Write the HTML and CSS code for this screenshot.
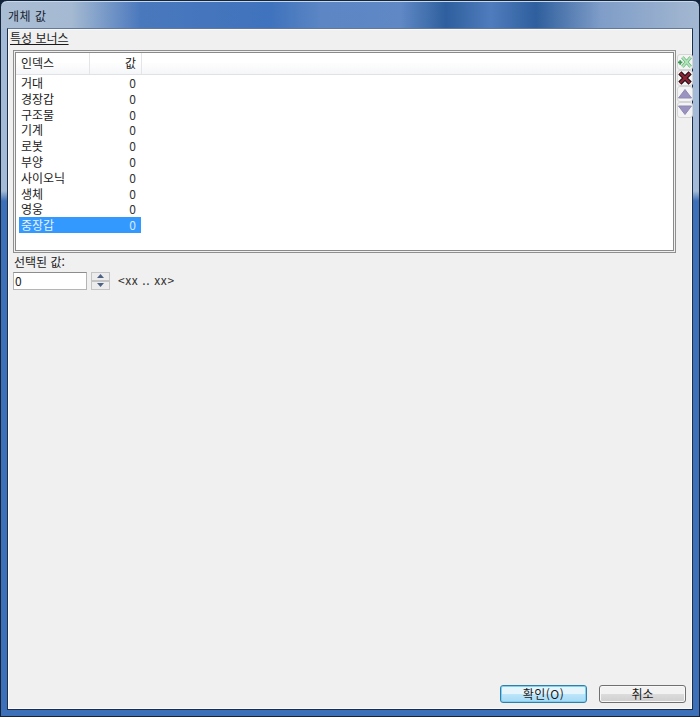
FILE: index.html
```html
<!DOCTYPE html>
<html lang="ko">
<head>
<meta charset="utf-8">
<title>개체 값</title>
<link rel="stylesheet" href="styles.css">
</head>
<body>
<div class="window">
  <div class="titlebar">개체 값</div>
  <div class="client">
    <div class="section-label">특성 보너스</div>
    <div class="list-row">
      <div class="list-box">
        <div class="list-inner">
          <div class="list-head">
            <div class="col-name">인덱스</div>
            <div class="col-value">값</div>
          </div>
          <div class="list-body">
            <div class="row"><span class="name">거대</span><span class="value">0</span></div>
            <div class="row"><span class="name">경장갑</span><span class="value">0</span></div>
            <div class="row"><span class="name">구조물</span><span class="value">0</span></div>
            <div class="row"><span class="name">기계</span><span class="value">0</span></div>
            <div class="row"><span class="name">로봇</span><span class="value">0</span></div>
            <div class="row"><span class="name">부양</span><span class="value">0</span></div>
            <div class="row"><span class="name">사이오닉</span><span class="value">0</span></div>
            <div class="row"><span class="name">생체</span><span class="value">0</span></div>
            <div class="row"><span class="name">영웅</span><span class="value">0</span></div>
            <div class="row selected"><span class="name">중장갑</span><span class="value">0</span></div>
          </div>
        </div>
      </div>
      <div class="tools">
        <div class="tool">
          <svg viewBox="0 0 16 14" width="16" height="14"><path d="M0 7.5h5M2.5 5v5" stroke="#3f9a58" stroke-width="2" fill="none"/><path d="M5 1.5l9.5 11M14.5 1.5L5 12.5" stroke="#5fae72" stroke-width="3.6" fill="none"/><path d="M5 1.5l9.5 11M14.5 1.5L5 12.5" stroke="#b4e6bc" stroke-width="2" fill="none"/></svg>
        </div>
        <div class="tool">
          <svg viewBox="0 0 15 14" width="15" height="14"><path d="M2 1.5l11 11M13 1.5L2 12.5" stroke="#15100f" stroke-width="4.8" fill="none"/><path d="M2 1.5l11 11M13 1.5L2 12.5" stroke="#8c2436" stroke-width="2.6" fill="none"/></svg>
        </div>
        <div class="tool">
          <svg viewBox="0 0 14 10" width="14" height="10"><path d="M7 .5l6.5 8.5H.5z" fill="#9a92bf" stroke="#8f87b4"/></svg>
        </div>
        <div class="tool">
          <svg viewBox="0 0 14 10" width="14" height="10"><path d="M7 9.5L.5 1h13z" fill="#9a92bf" stroke="#8f87b4"/></svg>
        </div>
      </div>
    </div>
    <div class="selected-label">선택된 값:</div>
    <div class="editor">
      <div class="input">0</div>
      <div class="spinner">
        <div class="spin"><svg viewBox="0 0 7 4" width="7" height="4"><path d="M3.5 0L7 4H0z" fill="#4d6185"/></svg></div>
        <div class="spin"><svg viewBox="0 0 7 4" width="7" height="4"><path d="M3.5 4L7 0H0z" fill="#4d6185"/></svg></div>
      </div>
      <div class="range">&lt;xx .. xx&gt;</div>
    </div>
    <div class="actions">
      <div class="btn default">확인(O)</div>
      <div class="btn">취소</div>
    </div>
  </div>
</div>
</body>
</html>
```
FILE: styles.css
```css
html, body {
  margin: 0;
  padding: 0;
  background: #10223a;
}
.window {
  box-sizing: border-box;
  width: 700px;
  height: 717px;
  display: flex;
  flex-direction: column;
  padding: 0 6px 6px;
  border: 1px solid #16243a;
  border-radius: 7px 7px 0 0;
  background:
    linear-gradient(90deg, #a9bdd4 0, #a5bad2 70px, #4a78bd 140px, #3f73bd 270px, #5c86c4 320px, #5f88c5 400px, #2f5f9e 445px, #4f7cbc 490px, #2f5f9e 535px, #7f9dc8 600px, #9db3cf 680px, #a3b7d1 700px) 0 0 / 100% 28px no-repeat,
    linear-gradient(#a3bbd6 0, #a3bbd6 190px, #3c70b8 200px, #3c70b8 100%);
  box-shadow: inset 0 1px 0 #c4d9ee;
  font-family: "Noto Sans CJK KR", "Liberation Sans", sans-serif;
  font-size: 12px;
  color: #1a1a1a;
}
.titlebar {
  height: 27px;
  line-height: 29px;
  padding-left: 1px;
  letter-spacing: .5px;
  color: #18222e;
}
.client {
  flex: 1;
  min-height: 0;
  display: flex;
  flex-direction: column;
  box-sizing: border-box;
  background: #f0f0f0;
  border: 1px solid #1d2e48;
  border-top-color: #64799a;
  box-shadow: inset 0 0 0 1px #fafafa;
  padding: 1px 0 6px 2px;
}
.section-label {
  height: 20px;
  line-height: 16px;
  text-decoration: underline;
}
.list-row {
  display: flex;
  align-items: flex-start;
}
.list-box {
  box-sizing: border-box;
  flex: none;
  width: 663px;
  height: 203px;
  margin-left: 3px;
  border: 1px solid #8f8f8f;
  background: #f0f0f0;
  padding: 1px;
}
.list-inner {
  box-sizing: border-box;
  height: 100%;
  background: #fff;
  border: 1px solid #8a8a8a;
  padding-left: 3px;
}
.list-head {
  display: flex;
  height: 21px;
  margin-left: -3px;
  background: linear-gradient(#ffffff 40%, #f5f6f8);
  border-bottom: 1px solid #dfe3e8;
  line-height: 20px;
}
.col-name {
  box-sizing: border-box;
  width: 74px;
  padding-left: 5px;
  border-right: 1px solid #e3e5e8;
}
.col-value {
  box-sizing: border-box;
  width: 52px;
  padding-right: 5px;
  text-align: right;
  border-right: 1px solid #e3e5e8;
}
.row {
  display: flex;
  width: 122px;
  height: 15.8px;
  line-height: 16px;
}
.row .name {
  flex: 1;
  padding-left: 2px;
}
.row .value {
  padding-right: 5px;
  color: #333;
}
.row.selected {
  background: #3399ff;
  color: #e8f2ff;
}
.row.selected .value {
  color: #d7e9ff;
}
.tools {
  display: flex;
  flex-direction: column;
  margin-left: 1px;
  padding-top: 4px;
}
.tool {
  box-sizing: border-box;
  width: 16px;
  height: 16px;
  display: flex;
  align-items: center;
  justify-content: center;
  border: 1px solid #d5d5d5;
  border-radius: 3px;
  background: #f4f4f4;
}
.selected-label {
  margin-left: 4px;
  height: 18px;
  line-height: 17px;
}
.editor {
  display: flex;
  align-items: center;
  margin-left: 3px;
}
.input {
  box-sizing: border-box;
  width: 74px;
  height: 18px;
  line-height: 15px;
  padding-left: 1px;
  background: #fff;
  border: 1px solid #b5b5b5;
  border-top-color: #8d8d8d;
}
.spinner {
  margin-left: 4px;
  display: flex;
  flex-direction: column;
}
.spin {
  box-sizing: border-box;
  width: 19px;
  height: 9px;
  display: flex;
  align-items: center;
  justify-content: center;
  border: 1px solid #c4c4c4;
  background: #ececec;
}
.range {
  margin-left: 8px;
  padding-bottom: 2px;
  letter-spacing: .6px;
  color: #333;
}
.actions {
  margin-top: auto;
  display: flex;
  justify-content: flex-end;
  gap: 12px;
  padding-right: 6px;
}
.btn {
  box-sizing: border-box;
  width: 87px;
  height: 18px;
  line-height: 15px;
  text-align: center;
  border: 1px solid #707070;
  border-radius: 3px;
  background: linear-gradient(#f2f2f2 50%, #dcdcdc 50%, #cfcfcf);
  box-shadow: inset 0 0 0 1px #f8f8f8;
}
.btn.default {
  letter-spacing: .5px;
  border-color: #2f7fa8;
  background: linear-gradient(#e6f5fc 50%, #bde6fa 50%, #a7d9f5);
  box-shadow: inset 0 0 0 1px #7fd0f0;
}
```
